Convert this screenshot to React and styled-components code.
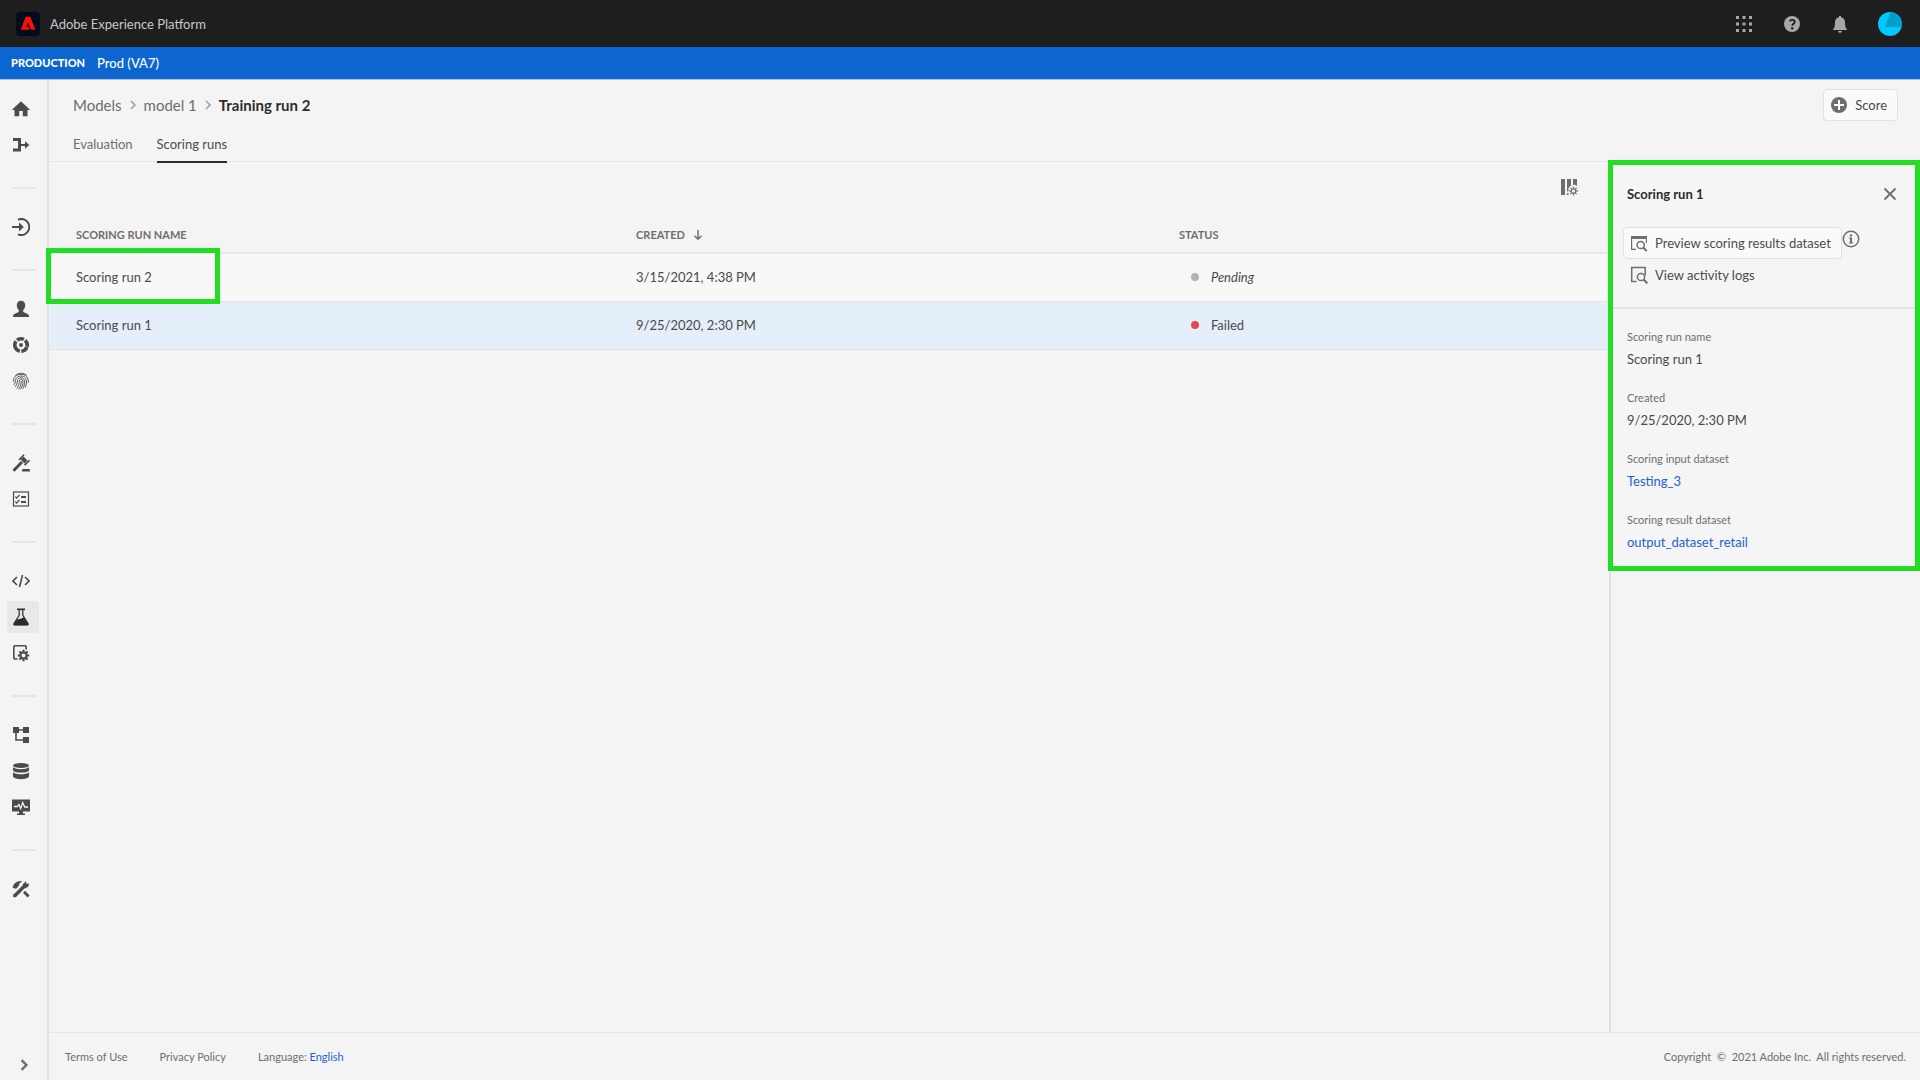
import React from "react";
import styled, { createGlobalStyle, css } from "styled-components";

const GlobalStyle = createGlobalStyle`
  * {
    box-sizing: border-box;
  }
  body {
    margin: 0;
    background: #f4f4f4;
    color: #4b4b4b;
    font-family: Lato, "Liberation Sans", sans-serif;
    font-size: 13px;
    line-height: 20px;
  }
  button {
    font: inherit;
    color: inherit;
    background: transparent;
    border: 0;
    padding: 0;
    cursor: pointer;
  }
  a {
    color: inherit;
    text-decoration: none;
  }
  svg {
    display: block;
    flex: none;
  }
`;

const Page = styled.div`
  display: flex;
  flex-direction: column;
  min-height: 100vh;
`;

const TopBar = styled.header`
  display: flex;
  align-items: center;
  height: 47px;
  padding: 0 18px 0 16px;
  background: #1e1e1e;
  color: #c8c8c8;
`;

const Brand = styled.a`
  display: flex;
  align-items: center;
  gap: 10px;
`;

const TopActions = styled.div`
  display: flex;
  align-items: center;
  gap: 28px;
  margin-left: auto;
  color: #a8a8a8;
`;

const TopButton = styled.button`
  display: flex;
  justify-content: center;
  width: 20px;
`;

const Avatar = styled.button`
  width: 24px;
  height: 24px;
`;

const SandboxBar = styled.div`
  display: flex;
  align-items: center;
  gap: 12px;
  height: 33px;
  padding: 0 11px;
  background: #0d66d0;
  border-bottom: 1px solid #a9c4e6;
  color: #fff;
  font-weight: 500;
`;

const SandboxType = styled.span`
  font-size: 11px;
  font-weight: 900;
`;

const Body = styled.div`
  display: flex;
  flex: 1;
`;

const Sidebar = styled.nav`
  display: flex;
  flex-direction: column;
  width: 49px;
  padding: 13px 8px 0 7px;
  border-right: 2px solid #e1e1e1;
`;

const NavGroup = styled.div`
  display: flex;
  flex-direction: column;
  gap: 4px;

  & + &::before {
    content: "";
    height: 2px;
    margin: 26px 3px 18px 5px;
    background: #e6e6e6;
  }
`;

const NavItem = styled.a`
  display: flex;
  align-items: center;
  width: 32px;
  height: 32px;
  padding-left: 5px;
  border-radius: 4px;
  color: ${(p) => (p.$active ? "#2c2c2c" : "#4b4b4b")};
  background: ${(p) => (p.$active ? "#e8e8e8" : "transparent")};
`;

const Expand = styled.button`
  display: flex;
  align-items: center;
  justify-content: center;
  width: 34px;
  height: 30px;
  margin-top: auto;
  color: #6e6e6e;
`;

const Main = styled.main`
  display: flex;
  flex-direction: column;
  flex: 1;
  min-width: 0;
`;

const PageHeader = styled.div`
  display: flex;
  align-items: center;
  justify-content: space-between;
  height: 49px;
  padding: 0 22px 0 24px;
`;

const Breadcrumbs = styled.nav`
  display: flex;
  align-items: center;
  gap: 6px;
  color: #6e6e6e;
  font-size: 15px;

  svg {
    color: #a0a0a0;
  }
`;

const Current = styled.strong`
  color: #2c2c2c;
  font-weight: 700;
`;

const Button = styled.button`
  display: flex;
  align-items: center;
  gap: 7px;
  height: 32px;
  padding: 0 10px 0 6px;
  border: 1px solid transparent;
  border-radius: 4px;
  color: #4b4b4b;

  svg {
    color: #6e6e6e;
  }

  ${(p) =>
    p.$outlined &&
    css`
      background: #fafafa;
      border-color: #e1e1e1;
    `}
`;

const Tabs = styled.div`
  display: flex;
  gap: 24px;
  height: 33px;
  padding: 0 24px;
  border-bottom: 1px solid #e6e6e6;
`;

const Tab = styled.button`
  height: 34px;
  padding-bottom: 2px;
  border-bottom: 2px solid ${(p) => (p.$active ? "#2c2c2c" : "transparent")};
  color: ${(p) => (p.$active ? "#4b4b4b" : "#6e6e6e")};
`;

const Content = styled.div`
  display: flex;
  flex: 1;
`;

const TableArea = styled.section`
  flex: 1;
  min-width: 0;
`;

const TableTools = styled.div`
  display: flex;
  justify-content: flex-end;
  align-items: center;
  height: 50px;
  padding-right: 31px;
  color: #6e6e6e;
`;

const Table = styled.table`
  width: 100%;
  border-collapse: separate;
  border-spacing: 0;
  table-layout: fixed;
`;

const HeadCell = styled.th`
  width: ${(p) => p.$width};
  height: 42px;
  padding: 6px 27px 0;
  border-bottom: 2px solid #e8e8e8;
  color: #6e6e6e;
  font-size: 11px;
  font-weight: 700;
  text-align: left;
  text-transform: uppercase;
`;

const SortLabel = styled.span`
  display: flex;
  align-items: center;
  gap: 8px;
`;

const Row = styled.tr`
  background: ${(p) => (p.$selected ? "#e5effa" : "#f8f8f8")};
`;

const Cell = styled.td`
  position: relative;
  height: 48px;
  padding: 0 27px 2px;
  border-bottom: 1px solid #e1e1e1;
`;

const Status = styled.span`
  display: flex;
  align-items: center;
  gap: 12px;
  padding-left: 12px;
  font-style: ${(p) => (p.$pending ? "italic" : "normal")};

  &::before {
    content: "";
    width: 8px;
    height: 8px;
    border-radius: 50%;
    background: ${(p) => (p.$pending ? "#b3b3b3" : "#e34850")};
  }
`;

const highlight = css`
  position: absolute;
  border: 5px solid #22dd22;
  pointer-events: none;
`;

const RowHighlight = styled.span`
  ${highlight}
  top: -6px;
  left: -3px;
  width: 174px;
  height: 56px;
`;

const PanelHighlight = styled.span`
  ${highlight}
  inset: -2px 0 0 -3px;
`;

const Panel = styled.aside`
  width: 311px;
  border-left: 2px solid #e1e1e1;
`;

const PanelBody = styled.div`
  position: relative;
  padding-bottom: 2px;
  background: #f5f5f5;
`;

const PanelHeader = styled.div`
  display: flex;
  align-items: center;
  justify-content: space-between;
  height: 65px;
  padding: 0 23px 2px 16px;
  color: #6e6e6e;
`;

const PanelTitle = styled.h2`
  margin: 0;
  color: #2c2c2c;
  font-size: 13px;
  font-weight: 700;
`;

const PanelActions = styled.div`
  padding: 0 12px 16px;
  border-bottom: 2px solid #e4e4e4;
`;

const ActionRow = styled.div`
  display: flex;
  color: #6e6e6e;
`;

const InfoButton = styled.button`
  width: 20px;
  height: 24px;
`;

const Details = styled.dl`
  display: flex;
  flex-direction: column;
  gap: 16px;
  margin: 0;
  padding: 16px;
`;

const Label = styled.dt`
  height: 24px;
  line-height: 24px;
  color: #6e6e6e;
  font-size: 11px;
`;

const Value = styled.dd`
  height: 21px;
  margin: 0;
  line-height: 20px;
`;

const Link = styled.a`
  color: #1b63d3;
`;

const Footer = styled.footer`
  display: flex;
  align-items: center;
  gap: 32px;
  height: 48px;
  padding: 0 14px 0 16px;
  border-top: 1px solid #e6e6e6;
  color: #6e6e6e;
  font-size: 11px;
`;

const Copyright = styled.span`
  margin-left: auto;
  white-space: pre;
`;

const Icon = ({ size = 18, children, ...rest }) => (
  <svg width={size} height={size} viewBox="0 0 18 18" fill="currentColor" aria-hidden="true" {...rest}>
    {children}
  </svg>
);

const line = { fill: "none", stroke: "currentColor" };

const AdobeLogo = () => (
  <svg width="24" height="24" viewBox="0 0 24 24" aria-hidden="true">
    <rect width="24" height="24" rx="4" fill="#000b1d" />
    <path d="M9.6 4.700h4.800l4.900 13h-4.100c-.3 0-.5-.2-.6-.4L12 10.200l-1.700 4.200h2l1.200 3.300H4.800z" fill="#fa0f00" />
  </svg>
);

const AppsIcon = () => (
  <Icon>
    {[1, 7.5, 14].map((y) =>
      [1, 7.5, 14].map((x) => <rect key={`${x}-${y}`} x={x} y={y} width="3" height="3" />)
    )}
  </Icon>
);

const HelpIcon = () => (
  <Icon>
    <circle cx="9" cy="9" r="8" />
    <path d="M6.700 6.400c.5-1 1.400-1.500 2.500-1.500 1.500 0 2.500.8 2.500 2 0 1.900-2.400 2-2.400 3.900" fill="none" stroke="#1e1e1e" strokeWidth="1.900" />
    <circle cx="9.200" cy="13.200" r="1.200" fill="#1e1e1e" />
  </Icon>
);

const BellIcon = () => (
  <Icon>
    <path d="M9 1c.8 0 1.200.5 1.200 1.300 2.600.6 3.800 2.600 3.800 5.200 0 4 .7 5.500 2 6.700V15H2v-.8c1.300-1.200 2-2.700 2-6.700 0-2.600 1.200-4.600 3.800-5.200C7.800 1.500 8.200 1 9 1zM7 16h4c0 1-.9 1.800-2 1.800S7 17 7 16z" />
  </Icon>
);

const AvatarIcon = () => (
  <svg width="24" height="24" viewBox="0 0 24 24" aria-hidden="true">
    <circle cx="12" cy="12" r="12" fill="#00c8ff" />
    <path d="M12.500 0A12 12 0 0 1 23.500 15H7z" fill="#009fcb" />
  </svg>
);

const HomeIcon = () => (
  <Icon>
    <path d="M9 1.200 17.700 9.500c.2.300 0 .6-.3.600H15.500v6.200h-4.700V11H7.200v5.300H2.500v-6.200H.6c-.3 0-.5-.3-.3-.6z" />
  </Icon>
);

const MergeIcon = () => (
  <Icon>
    <path d="M1 2h8v6h4V5.300L17.300 9 13 12.700V10H9v5.500H1v-3h5v-7.500H1z" />
  </Icon>
);

const SourceIcon = () => (
  <Icon>
    <path d="M6 1.700A8 8 0 1 1 6 16.300" {...line} strokeWidth="2" />
    <path d="M0 8h7V4.500L11.800 9 7 13.500V10H0z" />
  </Icon>
);

const UserIcon = () => (
  <Icon>
    <path d="M9 .7c2.600 0 4.200 1.800 4.200 4.600 0 2-.8 3.800-2 4.800v1.200c0 .6.400.9 1 1.100 3 .9 4.800 1.900 4.800 3.600v1H1v-1c0-1.700 1.800-2.700 4.800-3.600.6-.2 1-.5 1-1.100v-1.200c-1.200-1-2-2.800-2-4.800C4.800 2.500 6.400.7 9 .7z" />
  </Icon>
);

const SegmentIcon = () => (
  <Icon>
    <circle cx="9" cy="9" r="6.200" {...line} strokeWidth="3.600" strokeDasharray="7 1.400 12.500 1.400 7 1.400 6.860 1.400" transform="rotate(20 9 9)" />
    <circle cx="9" cy="9" r="2" />
  </Icon>
);

const FingerprintIcon = () => (
  <Icon>
    <g {...line} strokeWidth="0.900" strokeLinecap="round">
      <path d="M3.500 3.300A8 8 0 0 1 14.300 3M1.600 9.500C1 4.800 4.600 2.300 9 2.300c4.800 0 7.800 3.200 7.300 8.200M2 12.700c1.900-2 1.100-3.800 1.700-5.400C4.500 5.200 6.500 4 9 4c3.600 0 5.600 2.400 5.500 6-.1 2-.4 3.700-1.100 5.200M3.300 14.600c2.300-2.300 1.700-4.800 2.200-6.500C6 6.500 7.300 5.700 9 5.700c2.500 0 3.800 1.700 3.700 4.300-.1 2.400-.8 4.700-1.800 6.600M5.100 16.200C7.500 13.500 7 10.800 7.300 9c.2-1.100.9-1.700 1.800-1.700 1.400 0 2 1 1.900 2.700-.1 2.700-1 5-2.500 7.100M6.900 17C8.700 14.700 9.300 12 9.200 9.200" />
    </g>
  </Icon>
);

const GavelIcon = () => (
  <Icon>
    <path d="M1.500 16.800 10 8" {...line} strokeWidth="3" />
    <path d="m8.500 5.500 3-3 4 4-3 3z" />
    <path d="M7 6 12 .8M12.500 11.300l5-5" {...line} strokeWidth="1.600" />
    <path d="M10 17.500v-1c0-1 .8-1.500 1.600-1.500h4.800c.8 0 1.600.5 1.600 1.500v1z" />
  </Icon>
);

const ChecklistIcon = () => (
  <Icon>
    <rect x="1.500" y="2" width="15" height="14" {...line} strokeWidth="1.200" />
    <path d="m3.300 6.500 1.200 1.500L7.500 5M3.300 11.500 4.500 13l3-3" {...line} strokeWidth="1.200" />
    <path d="M9 6h5v2H9zM9 11h5v2H9z" />
  </Icon>
);

const CodeIcon = () => (
  <Icon>
    <path d="M5 5 1 9l4 4M13 5l4 4-4 4M10.500 3l-3 12" {...line} strokeWidth="1.600" />
  </Icon>
);

const FlaskIcon = () => (
  <Icon>
    <path d="M5 .5h8v1.600H5z" />
    <path d="M7.200 2v5.300L2 15.500c-.4.900 0 1.500.7 1.500h12.600c.7 0 1.100-.6.7-1.500l-5.200-8.200V2" {...line} strokeWidth="1.200" />
    <path d="m5 11.500 3.500-.7L12 9.500l4.200 6.200c.4.800 0 1.500-.7 1.500h-13c-.7 0-1-.7-.7-1.500z" />
  </Icon>
);

const Gear = ({ cx, cy, r, hole = 2, width = 3 }) => (
  <g transform={`translate(${cx} ${cy})`}>
    <circle r={(r + hole) / 2} {...line} strokeWidth={r - hole} />
    {[0, 45, 90, 135, 180, 225, 270, 315].map((a) => (
      <rect key={a} x={-width / 4} y={-r - 1.6} width={width / 2} height="2.200" transform={`rotate(${a})`} />
    ))}
  </g>
);

const ServiceIcon = () => (
  <Icon>
    <path d="M5.500 15H3a1.200 1.200 0 0 1-1.200-1.200V2.900A1.200 1.200 0 0 1 3 1.700h10a1.200 1.200 0 0 1 1.200 1.200v2.600" {...line} strokeWidth="1.600" />
    <Gear cx="11.500" cy="11.500" r={4.2} width={4} />
  </Icon>
);

const SchemaIcon = () => (
  <Icon>
    <path d="M1 1h6v6H1zM11 1h6v6h-6zM11 11h6v6h-6z" />
    <path d="M6 4h6M4 6v8h8" {...line} strokeWidth="1.600" />
  </Icon>
);

const DatabaseIcon = () => (
  <Icon>
    <ellipse cx="9" cy="3.500" rx="8" ry="2.600" />
    <path d="M1 5c1.500 1.600 4.500 2.200 8 2.200S15.500 6.600 17 5v3.400c-1.200 1.500-4.200 2.200-8 2.200S2.200 9.900 1 8.400zM1 10.200c1.500 1.400 4.500 2 8 2s6.500-.6 8-2v4.600c-1 1.500-4.200 2.400-8 2.400s-7-.9-8-2.400z" />
  </Icon>
);

const MonitorIcon = () => (
  <Icon>
    <path d="M0 1.500h18v12h-7v2h2V17H5v-1.500h2v-2H0z" />
    <path d="M2 8.500h3.500l1.400-2 1.800 4 2-6 2 4.500h3.300" fill="none" stroke="#f4f4f4" strokeWidth="1.300" />
  </Icon>
);

const ToolsIcon = () => (
  <Icon>
    <path d="M.8 8C.8 4 4.300 1 9 1l1.200.9c-2.500.7-3.400 1.800-3 3.300L4.200 8.700z" />
    <path d="m12 11.800 4.600 4.600" {...line} strokeWidth="2.800" />
    <path d="M2.300 16.200 13.500 5" {...line} strokeWidth="3.400" />
    <path d="M10.600 4.400 14 1l.2 2.700L17 3.500l-.5 3L13 8.500zM1 17.300l.6-3.600 3 3z" />
  </Icon>
);

const ChevronIcon = ({ size = 10, width = 1.6 }) => (
  <svg width={size} height={size} viewBox="0 0 10 10" aria-hidden="true">
    <path d="m3 1 4 4-4 4" {...line} strokeWidth={width} />
  </svg>
);

const AddIcon = () => (
  <Icon>
    <circle cx="9" cy="9" r="8" />
    <path d="M9 4v10M4 9h10" stroke="#fafafa" strokeWidth="2" />
  </Icon>
);

const ColumnsIcon = () => (
  <Icon>
    <path d="M1 1h4v16H1zM7 1h4v6.500L8.500 10V13l-1.500.5zM7 15h1.500v2H7zM13 1h4v7l-2-1.200h-2z" />
    <Gear cx="13.500" cy="13" r={2.8} hole={1.6} width={2.4} />
  </Icon>
);

const SortIcon = () => (
  <svg width="10" height="12" viewBox="0 0 10 12" aria-hidden="true">
    <path d="M5 1v9M1.500 6.800 5 10.300l3.500-3.500" {...line} strokeWidth="1.500" />
  </svg>
);

const CloseIcon = () => (
  <svg width="14" height="14" viewBox="0 0 14 14" aria-hidden="true">
    <path d="m1.500 1.500 11 11M12.500 1.500l-11 11" {...line} strokeWidth="1.800" />
  </svg>
);

const PreviewIcon = () => (
  <Icon>
    <path d="M1 2h16v3H1z" />
    <path d="M16.400 4v5M1.600 4v11.400H6" {...line} strokeWidth="1.200" />
    <circle cx="10.700" cy="11" r="3.600" {...line} strokeWidth="1.500" />
    <path d="m13.200 13.500 3.600 3.600" {...line} strokeWidth="2" />
  </Icon>
);

const LogsIcon = () => (
  <Icon>
    <path d="M15.200 9.500V1.600H1.700v14h4.800" {...line} strokeWidth="1.500" />
    <circle cx="11" cy="11" r="3.600" {...line} strokeWidth="1.500" />
    <path d="m13.500 13.500 3.800 3.800" {...line} strokeWidth="2" />
  </Icon>
);

const InfoIcon = () => (
  <Icon>
    <circle cx="9" cy="9" r="7.700" {...line} strokeWidth="1.500" />
    <circle cx="9" cy="5.400" r="1.200" />
    <path d="M7 7.500h3v4.700h1v1.300H7v-1.300h1V8.800H7z" />
  </Icon>
);

const navGroups = [
  [
    { label: "Home", icon: HomeIcon },
    { label: "Workflows", icon: MergeIcon },
  ],
  [{ label: "Sources", icon: SourceIcon }],
  [
    { label: "Profiles", icon: UserIcon },
    { label: "Segments", icon: SegmentIcon },
    { label: "Identities", icon: FingerprintIcon },
  ],
  [
    { label: "Policies", icon: GavelIcon },
    { label: "Requests", icon: ChecklistIcon },
  ],
  [
    { label: "Notebooks", icon: CodeIcon },
    { label: "Models", icon: FlaskIcon, active: true },
    { label: "Services", icon: ServiceIcon },
  ],
  [
    { label: "Schemas", icon: SchemaIcon },
    { label: "Datasets", icon: DatabaseIcon },
    { label: "Monitoring", icon: MonitorIcon },
  ],
  [{ label: "Administration", icon: ToolsIcon }],
];

const runs = [
  { name: "Scoring run 2", created: "3/15/2021, 4:38 PM", status: "Pending", highlighted: true },
  { name: "Scoring run 1", created: "9/25/2020, 2:30 PM", status: "Failed", selected: true },
];

const details = [
  { label: "Scoring run name", value: "Scoring run 1" },
  { label: "Created", value: "9/25/2020, 2:30 PM" },
  { label: "Scoring input dataset", value: "Testing_3", link: true },
  { label: "Scoring result dataset", value: "output_dataset_retail", link: true },
];

const SideNav = () => (
  <Sidebar aria-label="Main">
    {navGroups.map((group) => (
      <NavGroup key={group[0].label}>
        {group.map(({ label, icon: ItemIcon, active }) => (
          <NavItem key={label} href="#" aria-label={label} $active={active}>
            <ItemIcon />
          </NavItem>
        ))}
      </NavGroup>
    ))}
    <Expand aria-label="Expand menu">
      <ChevronIcon size={12} width={2} />
    </Expand>
  </Sidebar>
);

const RunsTable = () => (
  <Table>
    <thead>
      <tr>
        <HeadCell $width="35.9%">Scoring run name</HeadCell>
        <HeadCell $width="34.8%" aria-sort="descending">
          <SortLabel>
            Created <SortIcon />
          </SortLabel>
        </HeadCell>
        <HeadCell>Status</HeadCell>
      </tr>
    </thead>
    <tbody>
      {runs.map((run) => (
        <Row key={run.name} $selected={run.selected}>
          <Cell>
            {run.name}
            {run.highlighted && <RowHighlight />}
          </Cell>
          <Cell>{run.created}</Cell>
          <Cell>
            <Status $pending={run.status === "Pending"}>{run.status}</Status>
          </Cell>
        </Row>
      ))}
    </tbody>
  </Table>
);

const DetailsPanel = () => (
  <Panel>
    <PanelBody>
      <PanelHeader>
        <PanelTitle>Scoring run 1</PanelTitle>
        <button aria-label="Close">
          <CloseIcon />
        </button>
      </PanelHeader>
      <PanelActions>
        <ActionRow>
          <Button $outlined>
            <PreviewIcon />
            Preview scoring results dataset
          </Button>
          <InfoButton aria-label="More information">
            <InfoIcon />
          </InfoButton>
        </ActionRow>
        <ActionRow>
          <Button>
            <LogsIcon />
            View activity logs
          </Button>
        </ActionRow>
      </PanelActions>
      <Details>
        {details.map((item) => (
          <div key={item.label}>
            <Label>{item.label}</Label>
            <Value>{item.link ? <Link href="#">{item.value}</Link> : item.value}</Value>
          </div>
        ))}
      </Details>
      <PanelHighlight />
    </PanelBody>
  </Panel>
);

export default () => (
  <Page>
    <GlobalStyle />
    <TopBar>
      <Brand href="#">
        <AdobeLogo />
        Adobe Experience Platform
      </Brand>
      <TopActions>
        <TopButton aria-label="Apps">
          <AppsIcon />
        </TopButton>
        <TopButton aria-label="Help">
          <HelpIcon />
        </TopButton>
        <TopButton aria-label="Notifications">
          <BellIcon />
        </TopButton>
        <Avatar aria-label="Account">
          <AvatarIcon />
        </Avatar>
      </TopActions>
    </TopBar>
    <SandboxBar>
      <SandboxType>PRODUCTION</SandboxType>
      Prod (VA7)
    </SandboxBar>
    <Body>
      <SideNav />
      <Main>
        <PageHeader>
          <Breadcrumbs aria-label="Breadcrumb">
            <a href="#">Models</a>
            <ChevronIcon />
            <a href="#">model 1</a>
            <ChevronIcon />
            <Current>Training run 2</Current>
          </Breadcrumbs>
          <Button $outlined>
            <AddIcon />
            Score
          </Button>
        </PageHeader>
        <Tabs role="tablist">
          <Tab role="tab">Evaluation</Tab>
          <Tab role="tab" aria-selected="true" $active>
            Scoring runs
          </Tab>
        </Tabs>
        <Content>
          <TableArea>
            <TableTools>
              <button aria-label="Configure columns">
                <ColumnsIcon />
              </button>
            </TableTools>
            <RunsTable />
          </TableArea>
          <DetailsPanel />
        </Content>
        <Footer>
          <a href="#">Terms of Use</a>
          <a href="#">Privacy Policy</a>
          <span>
            Language: <Link href="#">English</Link>
          </span>
          <Copyright>{"Copyright  ©  2021 Adobe Inc.  All rights reserved."}</Copyright>
        </Footer>
      </Main>
    </Body>
  </Page>
);
